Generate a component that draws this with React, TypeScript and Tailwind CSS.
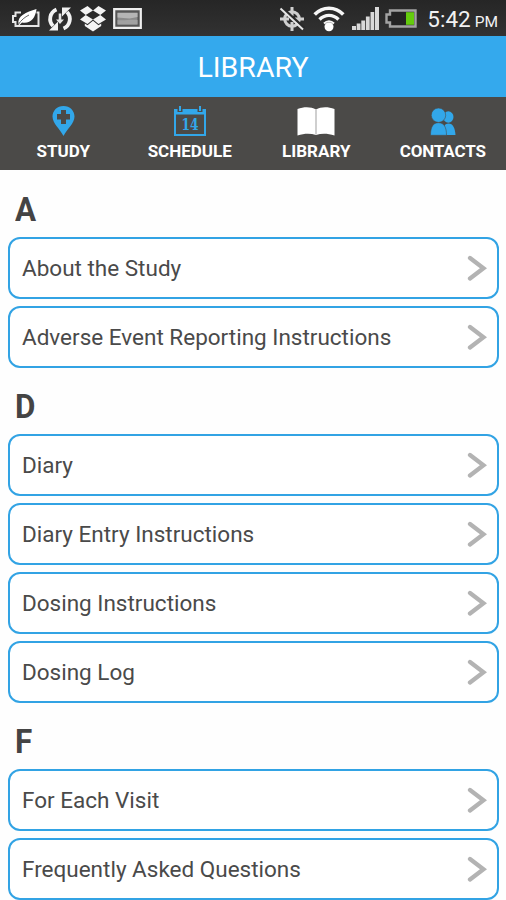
import clsx from "clsx";

const sections = [
  { letter: "A", items: ["About the Study", "Adverse Event Reporting Instructions"] },
  { letter: "D", items: ["Diary", "Diary Entry Instructions", "Dosing Instructions", "Dosing Log"] },
  { letter: "F", items: ["For Each Visit", "Frequently Asked Questions"] },
];

const StatusBar = () => {
  return (
    <div className="flex h-9 items-center justify-between bg-gradient-to-b from-[#262626] to-[#323232] pl-[11px] pr-2 text-[#f2f2f2]">
      <div className="flex items-center pt-0.5">
        <svg width="29" height="22" viewBox="0 0 29 22" fill="none">
          <path d="M10 4.500H4.500V8H2v6h2.500v4h23V4.500h-2" stroke="#e6e6e6" strokeWidth="2" />
          <path d="M7.500 16C6 8 15 4 25.500 1c-1 9-6 15-14.500 13.500L7.500 18z" fill="#fff" />
          <path d="M7 17c3-5 7-8 11-10" stroke="#666" strokeWidth="1" />
        </svg>
        <svg className="ml-[7px]" width="26" height="26" viewBox="0 0 26 26" fill="none">
          <path d="M9.500 3.500A10.200 10.200 0 0 0 6 20" stroke="#f2f2f2" strokeWidth="3.800" />
          <path d="M16.500 22.500A10.200 10.200 0 0 0 20 6" stroke="#f2f2f2" strokeWidth="3.800" />
          <path d="M2 24.500h9v-9zM24 1.500h-9v9z" fill="#f2f2f2" />
          <path d="M11.700 7.500h2.600v6H17l-4 4.500-4-4.500h2.700z" fill="#e6e6e6" />
        </svg>
        <svg className="ml-[7px]" width="26" height="26" viewBox="0 0 26 26" fill="#f4f4f4">
          <path d="M7.500 0 13 4.500 5.700 9 0 4.500zM18.500 0 13 4.500 20.300 9 26 4.500zM0 13.500 5.700 9l7.300 4.500L7.500 18zM26 13.500 20.300 9 13 13.500l5.500 4.500zM13 14.800l5.500 4.500 2.700-1.700v2.400L13 25.500l-8.200-5.500v-2.400l2.700 1.700z" />
        </svg>
        <svg className="-mt-0.5 ml-[7px]" width="29" height="21" viewBox="0 0 29 21">
          <path d="M1.200 1.200h26.600v18.600H1.200z" fill="#555" stroke="#efefef" strokeWidth="2.200" />
          <path d="M4.500 4.500h20v12h-20z" fill="#8b8b8b" />
          <path d="M4.500 5h20v4l-8 1.500-12-1z" fill="#b5b5b5" />
          <path d="M4.500 12c7 1 12-1 20 0v4.500h-20z" fill="#a1a1a1" />
        </svg>
      </div>
      <div className="flex items-center pt-px">
        <svg width="26" height="26" viewBox="0 0 26 26" fill="none" stroke="#cfcfcf">
          <circle cx="13" cy="13" r="7.300" strokeWidth="3" />
          <path d="M13 1v9M13 16v9M1 13h9M16 13h9" strokeWidth="3" />
          <path d="m3.500 2 22 20" stroke="#292929" strokeWidth="2.500" />
          <path d="m1.500 2.500 22.500 21" stroke="#e5e5e5" strokeWidth="2" />
        </svg>
        <svg className="ml-[8px]" width="32" height="27" viewBox="0 0 32 27" fill="none" stroke="#f6f6f6">
          <path d="M1.700 9.500c8-8.300 20.600-8.300 28.600 0" strokeWidth="3.600" />
          <path d="M6.500 14.500c5.600-5.500 13.400-5.500 19 0" strokeWidth="3.400" />
          <path d="M11 18.500c3-3 7-3 10 0" strokeWidth="2" />
          <circle cx="16" cy="21.800" r="4.500" fill="#fff" stroke="none" />
        </svg>
        <svg className="ml-[7px]" width="27" height="23" viewBox="0 0 27 23" fill="#d9d9d9">
          <path d="M0 19h4v4H0zM4.700 16.500h3.800V23H4.700zM9.300 13.500h3.800V23H9.300zM13.900 9.500h3.800V23h-3.800zM18.500 5h3.700v18h-3.700zM23 0h4v23h-4z" />
        </svg>
        <svg className="ml-[6px]" width="32" height="19" viewBox="0 0 32 19">
          <path d="M5 1.500h25.500v16H5v-4H1.500v-8H5z" fill="#242424" stroke="#a3a3a3" strokeWidth="2.400" />
          <path d="M21 3.200h8v12.600h-8z" fill="#64cc0d" />
        </svg>
        <div className="ml-[10px] flex items-baseline whitespace-nowrap pt-1">
          <span className="text-[22.500px] leading-6">5:42</span>
          <span className="ml-1 text-[15.500px]">PM</span>
        </div>
      </div>
    </div>
  );
};

const StudyIcon = () => (
  <svg width="23" height="30" viewBox="0 0 23 30">
    <path d="M11.500 0C5 0 .5 4.700.5 10.500.5 17.500 8 23 11.500 30 15 23 22.500 17.500 22.500 10.500 22.500 4.700 18 0 11.500 0z" fill="#32a7ea" />
    <path d="M9 4h5v4h4v5.500h-4v4.500H9v-4.500H5V8h4z" fill="#4b4a48" />
  </svg>
);

const ScheduleIcon = () => (
  <svg width="32" height="30" viewBox="0 0 32 30">
    <path d="M0 3h32v27H0zM2 8.500V28h28V8.500z" fill="#32a7ea" fillRule="evenodd" />
    <path d="M3.500 2.500h5v3.500h-5zM23.500 2.500h5v3.500h-5z" fill="#4b4a48" />
    <path d="M5 0h2v5H5zM25 0h2v5h-2z" fill="#32a7ea" />
    <text x="16" y="24" textAnchor="middle" textLength="17" lengthAdjust="spacingAndGlyphs" className="font-['DejaVu_Serif',serif] text-[16px] font-bold" fill="#32a7ea">
      14
    </text>
  </svg>
);

const LibraryIcon = () => (
  <svg width="38" height="29" viewBox="0 0 38 29">
    <path d="M.5 2C7-.3 14-.3 19 2.500c5-2.800 12-2.800 18.500-.5v26.500c-7-2.200-13-2.200-18.500-.5-5.500-1.700-11.500-1.700-18.500.5z" fill="#fff" />
    <path d="M18 3h2v24.500h-2z" fill="#cfcfcf" />
  </svg>
);

const ContactsIcon = () => (
  <svg width="26" height="28" viewBox="0 0 26 28" fill="#32a7ea">
    <ellipse cx="18.300" cy="9" rx="5.200" ry="5.800" />
    <path d="M13 27c0-7 1-11.500 5.500-11.500 4.500 0 6.500 4.500 7 11.500z" />
    <circle cx="8.500" cy="7.200" r="7.200" stroke="#4b4a48" strokeWidth=".6" />
    <path d="M.5 27.300C.5 19 3 14.700 8.500 14.700s8 4.300 8 12.600z" stroke="#4b4a48" strokeWidth=".6" />
  </svg>
);

const tabs = [
  { label: "STUDY", icon: <StudyIcon /> },
  { label: "SCHEDULE", icon: <ScheduleIcon /> },
  { label: "LIBRARY", icon: <LibraryIcon /> },
  { label: "CONTACTS", icon: <ContactsIcon /> },
];

const TabBar = () => {
  return (
    <nav className="grid h-[73px] grid-cols-4 bg-[#4b4a48]">
      {tabs.map((tab, i) => (
        <div key={tab.label} className="flex flex-col items-center pt-2">
          <div className="flex h-[31px] items-end justify-center">{tab.icon}</div>
          <span className={clsx("mt-[5px] text-[17px] font-bold leading-5 text-white", i === 3 && "tracking-[-0.15px]")}>
            {tab.label}
          </span>
        </div>
      ))}
    </nav>
  );
};

const Row = ({ title }: { title: string }) => {
  return (
    <div className="flex h-[62px] items-center justify-between rounded-[12px] border-2 border-[#32a3e4] bg-white pl-3 pr-[10px]">
      <span className="pt-[2px] text-[22.500px] text-[#4a4a4a]">{title}</span>
      <svg width="20" height="26" viewBox="0 0 20 26" fill="none">
        <path d="m3 3 13.500 10.200L3 23.500" stroke="#b3b3b3" strokeWidth="4.300" strokeLinecap="round" />
      </svg>
    </div>
  );
};

const App = () => {
  return (
    <div className="h-[900px] w-[506px] overflow-hidden bg-[#fefefe] font-[Roboto,sans-serif]">
      <StatusBar />
      <header className="flex h-[61px] items-center justify-center bg-[#34a9ed] pt-[3px]">
        <h1 className="text-[28.500px] text-white">LIBRARY</h1>
      </header>
      <TabBar />
      <main className="pl-2 pr-[7px] pt-[1px]">
        {sections.map(section => (
          <section key={section.letter}>
            <h2 className="flex h-[66px] items-center pl-[7px] pt-3 text-[33px] font-bold text-[#444]">
              <span className="origin-left scale-x-95">{section.letter}</span>
            </h2>
            <div className="flex flex-col gap-[7px]">
              {section.items.map(item => (
                <Row key={item} title={item} />
              ))}
            </div>
          </section>
        ))}
      </main>
    </div>
  );
};

export default App;
